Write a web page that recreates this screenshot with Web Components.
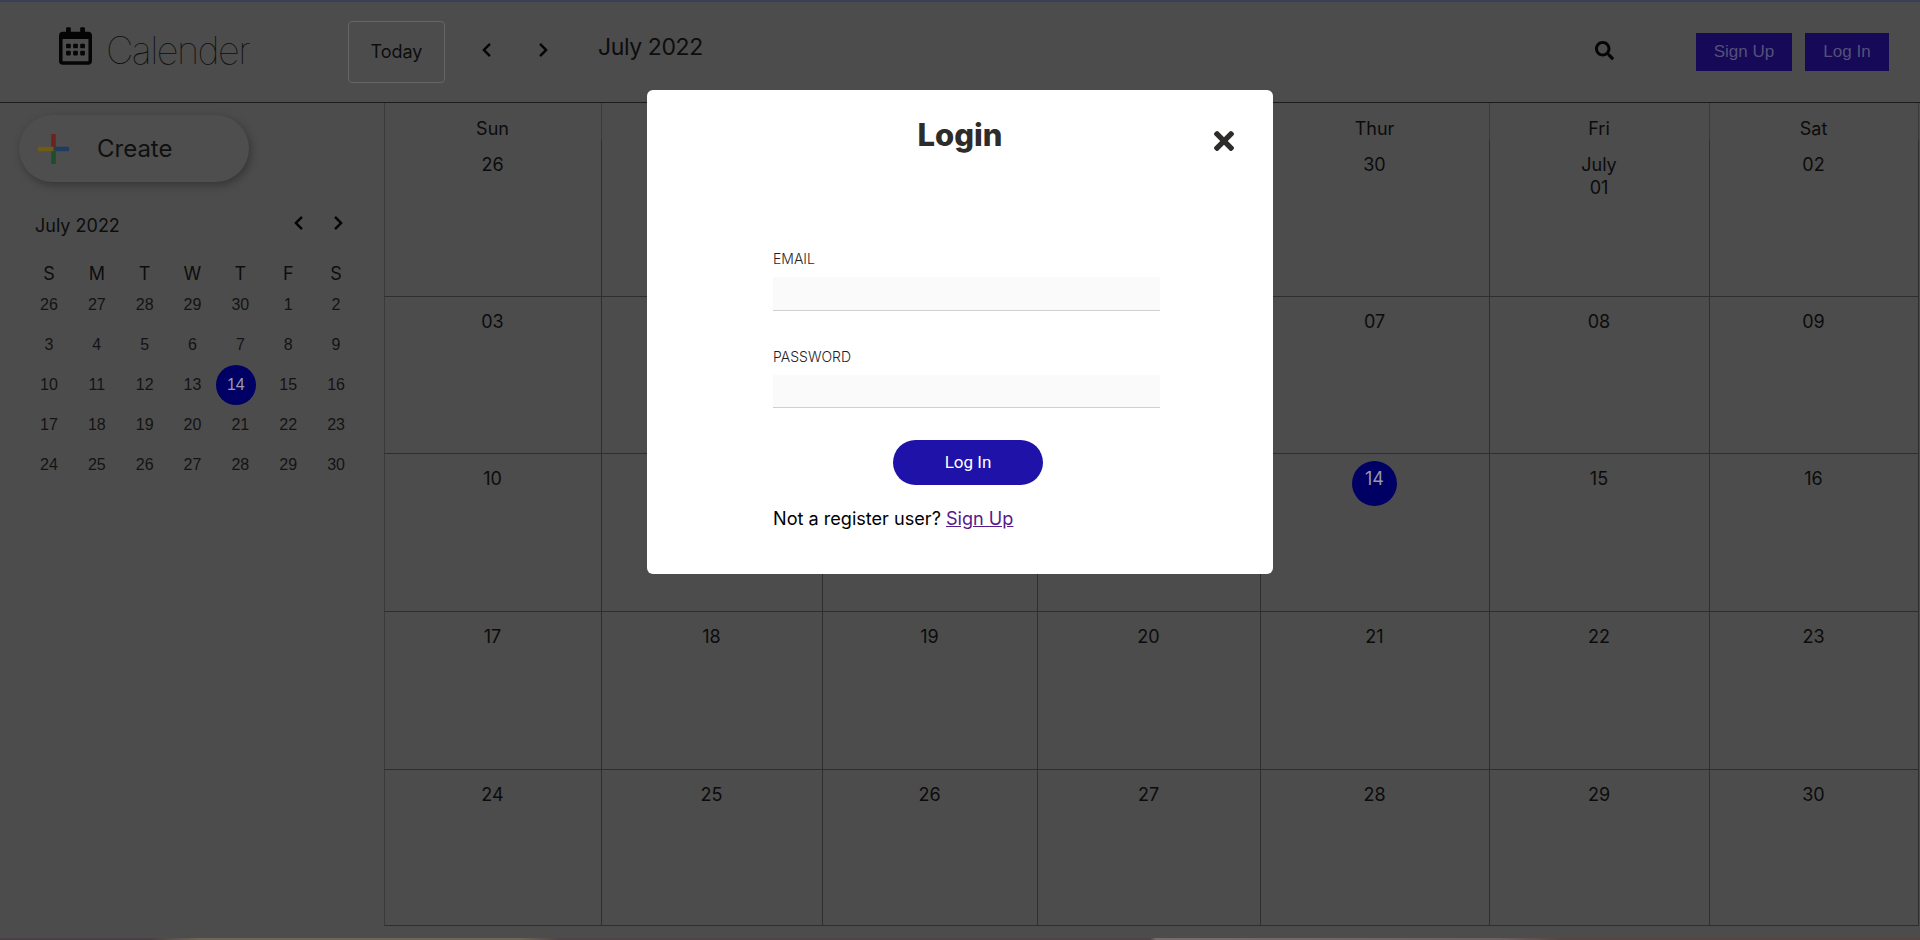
<!DOCTYPE html>
<html lang="en">
<head>
<meta charset="utf-8">
<title>Calender</title>
<style>
  html, body { margin: 0; height: 940px; overflow: hidden; background: #4c4c4c; }
  body { font-family: Inter, "Liberation Sans", sans-serif; color: #0f0f0f; }
</style>
</head>
<body>
<calendar-app></calendar-app>
<script>
const ICONS = {
    left: '<svg viewBox="20 30 280 452" width="9" height="14" fill="currentColor"><path d="M34.52 239.03L228.87 44.69c9.37-9.37 24.57-9.37 33.94 0l22.67 22.67c9.36 9.36 9.37 24.52.04 33.9L131.49 256l154.02 154.75c9.34 9.38 9.32 24.54-.04 33.9l-22.67 22.67c-9.37 9.37-24.57 9.37-33.94 0L34.52 272.97c-9.37-9.37-9.37-24.57 0-33.94z"/></svg>',
    right: '<svg viewBox="20 30 280 452" width="9" height="14" fill="currentColor"><path d="M285.476 272.971L91.132 467.314c-9.373 9.373-24.569 9.373-33.941 0l-22.667-22.667c-9.357-9.357-9.375-24.522-.04-33.901L188.505 256 34.484 101.255c-9.335-9.379-9.317-24.544.04-33.901l22.667-22.667c9.373-9.373 24.569-9.373 33.941 0L285.475 239.03c9.373 9.372 9.373 24.568.001 33.941z"/></svg>',
};

const headerTemplate = document.createElement('template');
headerTemplate.innerHTML = `
    <style>
        :host {
            display: flex;
            align-items: center;
            box-sizing: border-box;
            height: 103px;
            border-top: 2px solid #3a3f55;
            border-bottom: 1px solid #1c1c1c;
            padding: 0 31px 0 59px;
        }
        .logo { width: 33px; height: 38px; margin-top: -12px; color: #050505; }
        .name {
            width: 242px;
            margin: -5px 0 0 14px;
            font: 100 38px/1 Inter, sans-serif;
            letter-spacing: -1.6px;
            color: #0c0c0c;
        }
        .today {
            box-sizing: border-box;
            width: 97px;
            height: 62px;
            padding-bottom: 2px;
            border: 1px solid #666;
            border-radius: 4px;
            background: none;
            color: #0d0d0d;
            font: 18px Inter, sans-serif;
        }
        .nav { display: flex; margin: -4px 0 0 37px; gap: 48px; color: #050505; }
        .title { margin: -10px 0 0 50px; font-size: 23px; letter-spacing: -0.4px; color: #0d0d0d; flex: 1; }
        .search { width: 19px; height: 19px; color: #050505; margin: -4px 82px 0 0; }
        .btn {
            box-sizing: border-box;
            height: 38px;
            border: 0;
            background: #150958;
            color: #565078;
            font: 17px "Liberation Sans", sans-serif;
        }
        .signup { width: 96px; margin-right: 13px; }
        .login { width: 84px; }
    </style>
    <svg class="logo" viewBox="0 0 448 512" fill="currentColor"><path d="M148 288h-40c-6.6 0-12-5.4-12-12v-40c0-6.6 5.4-12 12-12h40c6.6 0 12 5.4 12 12v40c0 6.6-5.4 12-12 12zm108-12v-40c0-6.6-5.4-12-12-12h-40c-6.6 0-12 5.4-12 12v40c0 6.6 5.4 12 12 12h40c6.6 0 12-5.4 12-12zm96 0v-40c0-6.6-5.4-12-12-12h-40c-6.6 0-12 5.4-12 12v40c0 6.6 5.4 12 12 12h40c6.6 0 12-5.4 12-12zm-96 96v-40c0-6.6-5.4-12-12-12h-40c-6.6 0-12 5.4-12 12v40c0 6.6 5.4 12 12 12h40c6.6 0 12-5.4 12-12zm-96 0v-40c0-6.6-5.4-12-12-12h-40c-6.6 0-12 5.4-12 12v40c0 6.6 5.4 12 12 12h40c6.6 0 12-5.4 12-12zm192 0v-40c0-6.6-5.4-12-12-12h-40c-6.6 0-12 5.4-12 12v40c0 6.6 5.4 12 12 12h40c6.6 0 12-5.4 12-12zm96-260v352c0 26.5-21.5 48-48 48H48c-26.5 0-48-21.5-48-48V112c0-26.5 21.5-48 48-48h48V12c0-6.6 5.4-12 12-12h40c6.6 0 12 5.4 12 12v52h128V12c0-6.6 5.4-12 12-12h40c6.6 0 12 5.4 12 12v52h48c26.5 0 48 21.5 48 48zm-48 346V160H48v298c0 3.3 2.7 6 6 6h340c3.3 0 6-2.7 6-6z"/></svg>
    <span class="name">Calender</span>
    <button class="today">Today</button>
    <div class="nav">${ICONS.left}${ICONS.right}</div>
    <span class="title">July 2022</span>
    <svg class="search" viewBox="0 0 512 512" fill="currentColor"><path d="M505 442.7L405.3 343c-4.5-4.5-10.6-7-17-7H372c27.6-35.3 44-79.7 44-128C416 93.1 322.9 0 208 0S0 93.1 0 208s93.1 208 208 208c48.3 0 92.7-16.4 128-44v16.3c0 6.4 2.5 12.5 7 17l99.7 99.7c9.4 9.4 24.6 9.4 33.9 0l28.3-28.3c9.4-9.4 9.4-24.6.1-34zM208 336c-70.7 0-128-57.2-128-128 0-70.7 57.2-128 128-128 70.7 0 128 57.2 128 128 0 70.7-57.2 128-128 128z"/></svg>
    <button class="btn signup">Sign Up</button>
    <button class="btn login">Log In</button>
`;

class AppHeader extends HTMLElement {
    constructor() {
        super();
        this.attachShadow({ mode: 'open' }).appendChild(headerTemplate.content.cloneNode(true));
    }
}

const createTemplate = document.createElement('template');
createTemplate.innerHTML = `
    <style>
        :host {
            display: flex;
            align-items: center;
            box-sizing: border-box;
            width: 230px;
            height: 67px;
            margin: 12px 0 0 19px;
            padding-left: 19px;
            border-radius: 34px;
            background: #4e4e4e;
            box-shadow: 2px 3px 8px rgba(0, 0, 0, 0.3);
            font-size: 24px;
            color: #101010;
        }
        svg { width: 31px; height: 30px; margin-right: 28px; }
    </style>
    <svg viewBox="0 0 31 30" fill="none" stroke-width="4.5">
        <path d="M15.5 0v15" stroke="#6c231d"/>
        <path d="M15.5 15H31" stroke="#203c63"/>
        <path d="M15.5 15v15" stroke="#1e4d2c"/>
        <path d="M0 15h15.5" stroke="#6f5b18"/>
    </svg>
    <slot></slot>
`;

class CreateButton extends HTMLElement {
    constructor() {
        super();
        this.attachShadow({ mode: 'open' }).appendChild(createTemplate.content.cloneNode(true));
    }
}

const miniTemplate = document.createElement('template');
miniTemplate.innerHTML = `
    <style>
        :host { display: block; margin: 31px 0 0 25px; width: 335px; }
        .head { display: flex; align-items: center; height: 24px; padding-left: 10px; font-size: 18px; color: #0d0d0d; }
        .head span { flex: 1; }
        .arrows { display: flex; gap: 31px; margin: -4px 0 0 0; padding-right: 17px; color: #050505; }
        .grid {
            display: grid;
            grid-template-columns: repeat(7, 1fr);
            grid-template-rows: 22px;
            grid-auto-rows: 40px;
            margin-top: 26px;
            justify-items: center;
            align-items: center;
        }
        .wd { line-height: 22px; font-size: 18px; color: #0d0d0d; }
        .d { font: 16px "Liberation Sans", sans-serif; color: #131313; }
        .now {
            display: flex;
            align-items: center;
            justify-content: center;
            width: 40px;
            height: 40px;
            margin-left: -9px;
            border-radius: 50%;
            background: #000064;
            color: #9c9ca6;
        }
    </style>
    <div class="head"><span>July 2022</span><div class="arrows">${ICONS.left}${ICONS.right}</div></div>
    <div class="grid"></div>
`;

class MiniMonth extends HTMLElement {
    constructor() {
        super();
        this.attachShadow({ mode: 'open' }).appendChild(miniTemplate.content.cloneNode(true));
        const $grid = this.shadowRoot.querySelector('.grid');
        let html = 'SMTWTFS'.split('').map((l) => `<span class="wd">${l}</span>`).join('');
        [26, 27, 28, 29, 30].concat(Array.from({ length: 30 }, (_, i) => i + 1)).forEach((n, i) => {
            const isNow = n === 14 && i > 5;
            html += `<span class="d${isNow ? ' now' : ''}">${n}</span>`;
        });
        $grid.innerHTML = html;
    }
}

const monthTemplate = document.createElement('template');
monthTemplate.innerHTML = `
    <style>
        :host {
            display: grid;
            grid-template-columns: 218px 221px 215px 223px 229px 220px 209px;
            grid-template-rows: 37px 157px 157px 158px 158px 156px;
            font-size: 18px;
            color: #0b0b0b;
            text-align: center;
        }
        .wd { padding: 15px 1px 0 0; line-height: 22px; box-sizing: border-box; border-right: 1px solid #3a3a3a; }
        .wd:first-of-type, .cell:nth-of-type(7n + 1) { border-left: 1px solid #3a3a3a; }
        .cell {
            box-sizing: border-box;
            padding: 13px 1px 0 0;
            line-height: 23px;
            border-right: 1px solid #2e2e2e;
            border-bottom: 1px solid #2e2e2e;
        }
        .now {
            display: inline-block;
            width: 45px;
            height: 45px;
            margin-top: -8px;
            line-height: 35px;
            border-radius: 50%;
            background: #000064;
            color: #9898a6;
        }
    </style>
`;

class MonthGrid extends HTMLElement {
    constructor() {
        super();
        this.attachShadow({ mode: 'open' }).appendChild(monthTemplate.content.cloneNode(true));
        const days = ['Sun', 'Mon', 'Tue', 'Wed', 'Thur', 'Fri', 'Sat'];
        const dates = ['26', '27', '28', '29', '30', 'July<br>01', '02'];
        for (let n = 3; n <= 30; n += 1) {
            dates.push(String(n).padStart(2, '0'));
        }
        const $wrap = document.createElement('template');
        $wrap.innerHTML = days.map((d) => `<div class="wd">${d}</div>`).join('')
            + dates.map((d) => `<section class="cell">${d === '14' ? '<span class="now">14</span>' : d}</section>`).join('');
        this.shadowRoot.appendChild($wrap.content);
    }
}

const modalTemplate = document.createElement('template');
modalTemplate.innerHTML = `
    <style>
        :host {
            position: fixed;
            inset: 0;
            display: flex;
            justify-content: center;
            align-items: flex-start;
            padding-top: 90px;
        }
        .box {
            box-sizing: border-box;
            width: 626px;
            height: 484px;
            border-radius: 6px;
            background: #fff;
            color: #000;
        }
        .head { display: grid; grid-template-columns: 1fr auto 1fr; align-items: center; padding-top: 25px; }
        h2 { grid-column: 2; margin: 0; font: 800 31px/40px Inter, sans-serif; color: #2e2c2a; }
        .close { justify-self: end; width: 20px; height: 20px; margin: 11px 39px 0 0; color: #2e2c2a; }
        form { margin: 95px 0 0 126px; width: 387px; }
        label { display: block; height: 18px; font-size: 14px; font-weight: 300; line-height: 18px; color: #1f1f27; }
        .field {
            box-sizing: border-box;
            display: block;
            width: 100%;
            height: 34px;
            margin: 9px 0 37px;
            border: 0;
            border-bottom: 1px solid #cfcfcf;
            background: #fafafa;
        }
        .submit {
            display: block;
            width: 150px;
            height: 45px;
            margin: 32px 0 21px 120px;
            padding-bottom: 2px;
            border: 0;
            border-radius: 23px;
            background: #1e12a8;
            color: #fff;
            font: 400 17px Roboto, sans-serif;
        }
        .field:last-of-type { margin-bottom: 0; height: 33px; }
        p { margin: 0; font-size: 18.1px; line-height: 24px; }
        a { color: #551a8b; }
    </style>
    <div class="box">
        <div class="head">
            <h2>Login</h2>
            <svg class="close" viewBox="0 80 352 352" fill="currentColor"><path d="M242.72 256l100.07-100.07c12.28-12.28 12.28-32.19 0-44.48l-22.24-22.24c-12.28-12.28-32.19-12.28-44.48 0L176 189.28 75.93 89.21c-12.28-12.28-32.19-12.28-44.48 0L9.21 111.45c-12.28 12.28-12.28 32.19 0 44.48L109.28 256 9.21 356.07c-12.28 12.28-12.28 32.19 0 44.48l22.24 22.24c12.28 12.28 32.2 12.28 44.48 0L176 322.72l100.07 100.07c12.28 12.28 32.2 12.28 44.48 0l22.24-22.24c12.28-12.28 12.28-32.19 0-44.48L242.72 256z"/></svg>
        </div>
        <form>
            <label>EMAIL</label>
            <input class="field" type="text">
            <label>PASSWORD</label>
            <input class="field" type="password">
            <button class="submit" type="button">Log In</button>
            <p>Not a register user? <a href="#signup">Sign Up</a></p>
        </form>
    </div>
`;

class LoginModal extends HTMLElement {
    constructor() {
        super();
        this.attachShadow({ mode: 'open' }).appendChild(modalTemplate.content.cloneNode(true));
    }
}

const appTemplate = document.createElement('template');
appTemplate.innerHTML = `
    <style>
        :host { display: flex; flex-direction: column; height: 940px; }
        main { display: flex; flex: 1; }
        aside { width: 384px; flex: none; }
        .strip {
            height: 2px;
            background: linear-gradient(90deg, #474044 0, #474044 150px, #6f6656 200px, #6f6656 520px, #4e4346 560px, #4e4346 1150px, #786d6d 1156px, #6e6161 1500px, #574545 1560px, #574545 100%);
        }
    </style>
    <app-header></app-header>
    <main>
        <aside>
            <create-button>Create</create-button>
            <mini-month></mini-month>
        </aside>
        <month-grid></month-grid>
    </main>
    <div class="strip"></div>
    <login-modal></login-modal>
`;

class CalendarApp extends HTMLElement {
    constructor() {
        super();
        this.attachShadow({ mode: 'open' }).appendChild(appTemplate.content.cloneNode(true));
    }
}

customElements.define('app-header', AppHeader);
customElements.define('create-button', CreateButton);
customElements.define('mini-month', MiniMonth);
customElements.define('month-grid', MonthGrid);
customElements.define('login-modal', LoginModal);
customElements.define('calendar-app', CalendarApp);
</script>
</body>
</html>
